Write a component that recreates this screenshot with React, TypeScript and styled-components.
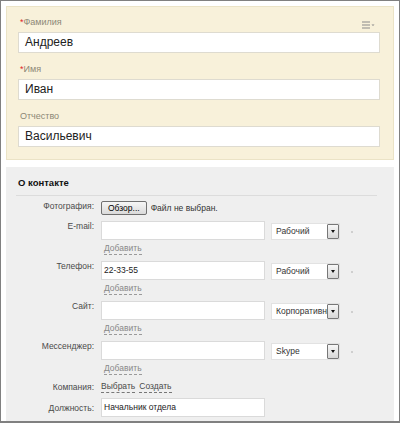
import React from "react";
import styled, { createGlobalStyle } from "styled-components";

const Global = createGlobalStyle`
  html, body { margin: 0; padding: 0; background: #fff; }
  body { font-family: "Liberation Sans", Arial, sans-serif; }
  * { box-sizing: border-box; }
`;

const Frame = styled.div`
  width: 400px;
  height: 423px;
  border: 1px solid #808080;
  border-bottom-width: 2px;
  background: #fff;
  padding: 5px 5px 0 5px;
  overflow: hidden;
  display: flex;
  flex-direction: column;
  gap: 7px;
`;

const NamePanel = styled.section`
  position: relative;
  background: #f8f1da;
  border: 1px solid #ebe3c6;
  padding: 9px 13px 12px 11px;
  display: flex;
  flex-direction: column;
  gap: 10px;
`;

const MenuButton = styled.span`
  position: absolute;
  top: 9px;
  right: 17px;
  display: block;
  width: 14px;
  height: 9px;
`;

const NameField = styled.div`
  display: flex;
  flex-direction: column;
  gap: 4px;
`;

const NameLabel = styled.label`
  font-size: 9px;
  line-height: 12px;
  color: #8c8876;
  padding-left: 2px;
`;

const Req = styled.span`
  color: #e0261d;
`;

const BigInput = styled.div`
  height: 21px;
  background: #fff;
  border: 1px solid #dedbd0;
  padding: 0 6px;
  font-size: 12px;
  line-height: 19px;
  color: #222;
`;

const ContactPanel = styled.section`
  flex: 1;
  background: #efefef;
  padding-top: 10px;
  display: flex;
  flex-direction: column;
`;

const Title = styled.h3`
  margin: 0 17px 0 10px;
  padding: 0 0 6px 2px;
  border-bottom: 1px solid #dcdcdc;
  font-size: 9.5px;
  line-height: 12px;
  font-weight: bold;
  color: #111;
`;

const Form = styled.div`
  display: flex;
  flex-direction: column;
  gap: 5px;
  margin-top: 4px;
`;

const Row = styled.div<{ $center?: boolean; $mt?: number }>`
  display: grid;
  grid-template-columns: 88px 1fr;
  column-gap: 7px;
  align-items: ${(p) => (p.$center ? "center" : "start")};
  margin-top: ${(p) => p.$mt ?? 0}px;
`;

const RowLabel = styled.div`
  text-align: right;
  font-size: 8.5px;
  line-height: 12px;
  color: #4a4a4a;
`;

const FieldCol = styled.div`
  display: flex;
  flex-direction: column;
  align-items: flex-start;
`;

const Line = styled.div<{ $mt?: number }>`
  display: flex;
  align-items: flex-start;
  margin-top: ${(p) => p.$mt ?? 0}px;
`;

const FileButton = styled.span`
  display: inline-block;
  height: 14px;
  margin-top: 1px;
  padding: 0 6px;
  border: 1px solid #707070;
  border-radius: 2px;
  background: linear-gradient(#f6f6f6, #dadada);
  font-size: 8.5px;
  line-height: 12px;
  color: #000;
`;

const FileText = styled.span`
  margin-left: 4px;
  font-size: 8.5px;
  line-height: 14px;
  margin-top: 1px;
  color: #333;
`;

const SmallInput = styled.div`
  width: 164px;
  height: 19px;
  background: #fff;
  border: 1px solid #dadada;
  padding: 0 2px;
  font-size: 8.5px;
  line-height: 17px;
  color: #222;
  white-space: nowrap;
`;

const Select = styled.div`
  display: flex;
  align-items: center;
  width: 69px;
  height: 17px;
  margin: 2px 0 0 6px;
  background: #fff;
  border: 1px solid #e2e2e2;
  padding-left: 4px;
`;

const SelectText = styled.span`
  flex: 1;
  overflow: hidden;
  white-space: nowrap;
  font-size: 8.5px;
  line-height: 15px;
  color: #333;
`;

const SelectArrow = styled.span`
  flex: none;
  display: flex;
  align-items: center;
  justify-content: center;
  width: 12px;
  height: 15px;
  border: 1px solid #777;
  border-radius: 1px;
  background: linear-gradient(#f7f7f7, #d6d6d6);
  &::after {
    content: "";
    border-left: 2.5px solid transparent;
    border-right: 2.5px solid transparent;
    border-top: 3px solid #111;
  }
`;

const RemoveDot = styled.span`
  width: 2px;
  height: 2px;
  margin: 10px 0 0 11px;
  background: #cfcfcf;
`;

const AddLink = styled.span`
  margin: 3px 0 0 3px;
  font-size: 8.5px;
  line-height: 11px;
  color: #888;
  border-bottom: 1px dashed #9a9a9a;
`;

const ActionLink = styled.span`
  font-size: 8.5px;
  line-height: 11px;
  color: #4a4a4a;
  border-bottom: 1px dashed #777;
  margin-right: 4px;
`;

const Links = styled.div`
  display: flex;
`;

const MenuIcon = () => (
  <MenuButton>
    <svg width="14" height="9" viewBox="0 0 14 9">
      <rect x="0" y="0.5" width="8" height="1" fill="#8a8a8a" />
      <rect x="0" y="3.5" width="8" height="1" fill="#8a8a8a" />
      <rect x="0" y="6.5" width="8" height="1" fill="#8a8a8a" />
      <path d="M9.5 3.5 L12.5 3.5 L11 5 Z" fill="#8a8a8a" />
    </svg>
  </MenuButton>
);

type Multi = { label: string; value: string; type: string };

const multis: Multi[] = [
  { label: "E-mail:", value: "", type: "Рабочий" },
  { label: "Телефон:", value: "22-33-55", type: "Рабочий" },
  { label: "Сайт:", value: "", type: "Корпоративный" },
  { label: "Мессенджер:", value: "", type: "Skype" },
];

export default function App() {
  return (
    <>
      <Global />
      <Frame>
        <NamePanel>
          <MenuIcon />
          <NameField>
            <NameLabel>
              <Req>*</Req>Фамилия
            </NameLabel>
            <BigInput>Андреев</BigInput>
          </NameField>
          <NameField>
            <NameLabel>
              <Req>*</Req>Имя
            </NameLabel>
            <BigInput>Иван</BigInput>
          </NameField>
          <NameField>
            <NameLabel>Отчество</NameLabel>
            <BigInput>Васильевич</BigInput>
          </NameField>
        </NamePanel>
        <ContactPanel>
          <Title>О контакте</Title>
          <Form>
            <Row>
              <RowLabel>Фотография:</RowLabel>
              <Line>
                <FileButton>Обзор...</FileButton>
                <FileText>Файл не выбран.</FileText>
              </Line>
            </Row>
            {multis.map((m) => (
              <Row key={m.label}>
                <RowLabel>{m.label}</RowLabel>
                <FieldCol>
                  <Line $mt={1}>
                    <SmallInput>{m.value}</SmallInput>
                    <Select>
                      <SelectText>{m.type}</SelectText>
                      <SelectArrow />
                    </Select>
                    <RemoveDot />
                  </Line>
                  <AddLink>Добавить</AddLink>
                </FieldCol>
              </Row>
            ))}
            <Row $mt={1}>
              <RowLabel>Компания:</RowLabel>
              <Links>
                <ActionLink>Выбрать</ActionLink>
                <ActionLink>Создать</ActionLink>
              </Links>
            </Row>
            <Row $center>
              <RowLabel>Должность:</RowLabel>
              <SmallInput>Начальник отдела</SmallInput>
            </Row>
          </Form>
        </ContactPanel>
      </Frame>
    </>
  );
}
